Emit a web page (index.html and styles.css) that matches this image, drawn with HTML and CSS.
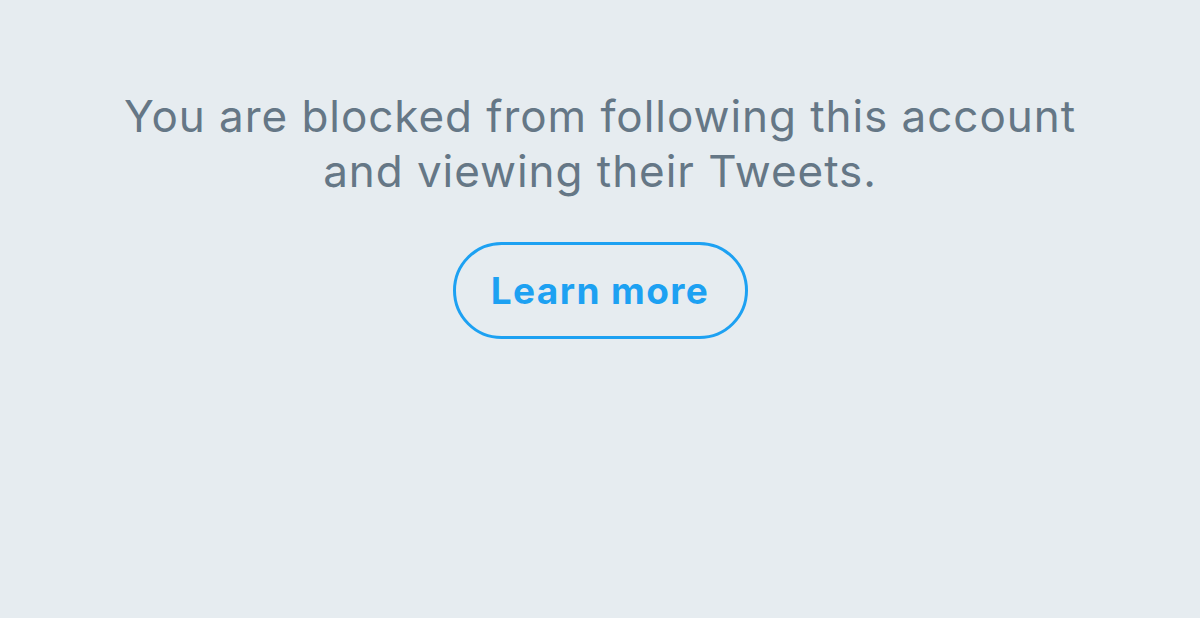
FILE: index.html
```html
<!DOCTYPE html>
<html>
<head>
<meta charset="utf-8">
<link rel="stylesheet" href="styles.css">
</head>
<body>
<main class="blocked">
  <p class="message">You are blocked from following this account and viewing their Tweets.</p>
  <a class="learn-btn" href="#">Learn more</a>
</main>
</body>
</html>
```

FILE: styles.css
```css
html, body {
  margin: 0;
  padding: 0;
  height: 100%;
  background: #e6ecf0;
}
body {
  font-family: Inter, "Noto Sans", sans-serif;
}
.blocked {
  display: flex;
  flex-direction: column;
  align-items: center;
  padding-top: 89px;
}
.message {
  margin: 0;
  width: 1000px;
  text-align: center;
  font-size: 44px;
  line-height: 55px;
  color: #657786;
  font-weight: 400;
  letter-spacing: 0.95px;
}
.learn-btn {
  margin-top: 43px;
  box-sizing: border-box;
  width: 295px;
  height: 97px;
  border: 3px solid #1da1f2;
  border-radius: 49px;
  display: flex;
  align-items: center;
  justify-content: center;
  color: #1da1f2;
  font-size: 37px;
  font-weight: 700;
  letter-spacing: 1.4px;
  text-decoration: none;
}
```
